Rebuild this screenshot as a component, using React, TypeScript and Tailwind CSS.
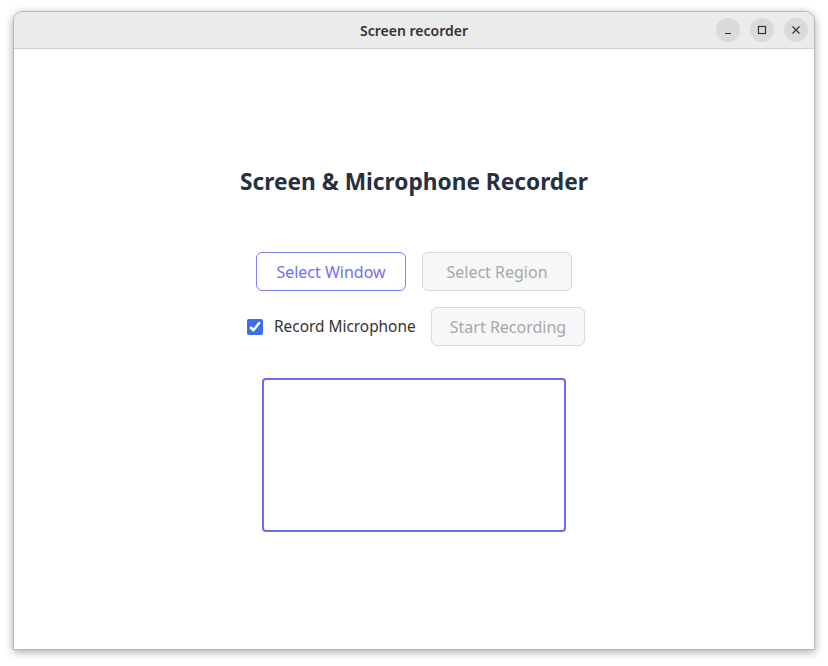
export default function App() {
  return (
    <div className="min-h-[666px] w-[828px] bg-white pt-[11px] pl-[13px]" style={{ fontFamily: '"Noto Sans", sans-serif' }}>
      {/* Window frame */}
      <div className="w-[802px] h-[639px] rounded-t-[10px] border border-[#b8b8b8] bg-white shadow-[0_2px_8px_rgba(0,0,0,0.35)] overflow-hidden flex flex-col">
        {/* Title bar */}
        <div className="relative h-[37px] shrink-0 bg-[#ebebeb] border-b border-[#d0d0d0] flex items-center justify-center">
          <span className="text-[14px] font-semibold text-[#333333]">Screen recorder</span>
          <div className="absolute right-[6px] top-[6px] flex gap-[10px]">
            <button className="w-[24px] h-[24px] rounded-full bg-[#dadada] flex items-center justify-center">
              <svg width="10" height="10" viewBox="0 0 10 10"><path d="M2 8.5h6" stroke="#333" strokeWidth="1.2" /></svg>
            </button>
            <button className="w-[24px] h-[24px] rounded-full bg-[#dadada] flex items-center justify-center">
              <svg width="10" height="10" viewBox="0 0 10 10"><rect x="1.5" y="1.5" width="7" height="7" fill="none" stroke="#333" strokeWidth="1.2" /></svg>
            </button>
            <button className="w-[24px] h-[24px] rounded-full bg-[#dadada] flex items-center justify-center">
              <svg width="10" height="10" viewBox="0 0 10 10"><path d="M1.5 1.5l7 7M8.5 1.5l-7 7" stroke="#333" strokeWidth="1.2" /></svg>
            </button>
          </div>
        </div>

        {/* Content */}
        <div className="flex-1 flex flex-col items-center pt-[117px]">
          <h1 className="text-[22.7px] leading-[31px] font-bold text-[#263040]">Screen &amp; Microphone Recorder</h1>

          <div className="mt-[55px] flex gap-[16px]">
            <button className="w-[150px] h-[39px] rounded-[6px] border border-[#8080f5] text-[16px] text-[#7070f0]">Select Window</button>
            <button className="w-[150px] h-[39px] rounded-[6px] border border-[#d8d8d8] bg-[#f7f7f7] text-[16px] text-[#a8a8a8]">Select Region</button>
          </div>

          <div className="mt-[16px] ml-[4px] flex items-center">
            <input type="checkbox" defaultChecked className="w-[16px] h-[16px] accent-[#3b6fe8]" />
            <span className="ml-[11px] w-[140px] whitespace-nowrap text-[15.4px] text-[#333333]">Record Microphone</span>
            <button className="ml-[17px] w-[154px] h-[39px] rounded-[6px] border border-[#d8d8d8] bg-[#f7f7f7] text-[16px] text-[#a8a8a8]">Start Recording</button>
          </div>

          <div className="mt-[32px] w-[304px] h-[154px] rounded-[4px] border-2 border-[#6b6bf5]" />
        </div>
      </div>
    </div>
  );
}
